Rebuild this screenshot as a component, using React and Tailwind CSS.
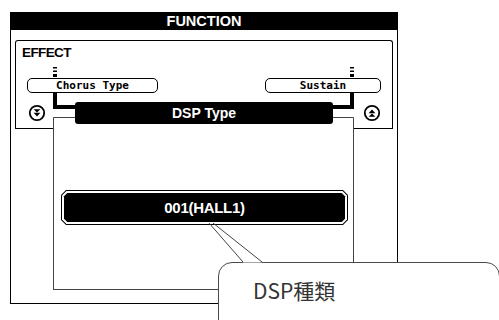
import React from "react";

// small "≡" level marker above the parameter boxes
const Marker = ({ className }) => (
  <svg width="4" height="10" viewBox="0 0 4 10" className={className}>
    <rect x="0" y="0" width="4" height="1.5" fill="#000" />
    <rect x="0" y="3.5" width="4" height="1.5" fill="#000" />
    <rect x="0" y="7" width="4" height="3" fill="#000" />
  </svg>
);

const ScrollIcon = ({ up }) => (
  <svg width="18" height="18" viewBox="0 0 18 18" className={up ? "rotate-180" : ""}>
    <circle cx="9" cy="9" r="7.2" fill="#fff" stroke="#000" strokeWidth="1.8" />
    <path d="M5.6 5.2h6.8L9 8.6z M5.6 8.8h6.8L9 12.4z" fill="#000" />
  </svg>
);

// chamfered polygon points, inset by d
const oct = (w, h, c, d) => {
  const e = c + d * 0.414;
  return [
    [e, d], [w - e, d], [w - d, e], [w - d, h - e],
    [w - e, h - d], [e, h - d], [d, h - e], [d, e],
  ].map((p) => p.join(",")).join(" ");
};

const ValueBar = ({ children }) => (
  <div className="relative w-[287px] h-[35px] flex items-center justify-center">
    <svg width="287" height="35" className="absolute inset-0">
      <polygon points={oct(287, 35, 5, 0)} fill="#000" />
      <polygon points={oct(287, 35, 5, 1)} fill="#fff" />
      <polygon points={oct(287, 35, 5, 3)} fill="#000" />
    </svg>
    <span className="relative text-white font-bold text-[15px] leading-none tracking-[-0.3px]">
      {children}
    </span>
  </div>
);

const ParamBox = ({ label, width, markerLeft }) => (
  <div className="flex flex-col">
    <Marker className={markerLeft} />
    <div
      className={`mt-[1px] h-[15px] ${width} border border-black rounded-[5px] flex items-center justify-center font-['DejaVu_Sans_Mono',monospace] font-bold text-[11px] leading-none`}
    >
      {label}
    </div>
  </div>
);

export default function App() {
  return (
    <div className="relative w-[499px] h-[320px] overflow-hidden bg-white text-black font-['Liberation_Sans',Arial,sans-serif]">
      <div className="ml-[10px] mt-[12px] w-[388px] h-[292px] border-x border-b border-black flex flex-col">
        <div className="h-[18px] bg-black text-white text-center font-bold text-[14.5px] leading-[18px]">
          FUNCTION
        </div>

        <div className="mt-[10px] mx-[4px]">
          {/* EFFECT panel head */}
          <div className="border-x border-t border-black rounded-t-[3px] flex flex-col">
            <div className="mt-[4px] ml-[6px] h-[16px] leading-[16px] font-bold text-[13.5px] tracking-[-0.6px]">
              EFFECT
            </div>
            <div className="mt-[6px] px-[11px] flex justify-between">
              <ParamBox label="Chorus Type" width="w-[131px]" markerLeft="ml-[26px]" />
              <ParamBox label="Sustain" width="w-[116px]" markerLeft="ml-[85px]" />
            </div>
            <div className="flex h-[36px]">
              <div className="w-[37px] border-b border-black pl-[12px] pt-[11px]">
                <ScrollIcon />
              </div>
              <svg width="22" height="36" viewBox="0 0 22 36" className="shrink-0">
                <rect x="0" y="0" width="4" height="16" fill="#000" />
                <rect x="0" y="12" width="22" height="4" fill="#000" />
                <path d="M22 24.5H0.5V36" fill="none" stroke="#444" strokeWidth="1" />
              </svg>
              <div className="w-[258px] pt-[9px]">
                <div className="h-[22px] bg-black rounded-[3px] flex items-center justify-center text-white font-bold text-[14px] leading-none">
                  DSP Type
                </div>
              </div>
              <svg width="21" height="36" viewBox="0 0 21 36" className="shrink-0">
                <rect x="17" y="0" width="4" height="16" fill="#000" />
                <rect x="0" y="12" width="21" height="4" fill="#000" />
                <path d="M0 24.5H20.5V36" fill="none" stroke="#444" strokeWidth="1" />
              </svg>
              <div className="w-[38px] border-b border-black pl-[9px] pt-[11px]">
                <ScrollIcon up />
              </div>
            </div>
          </div>

          {/* value area */}
          <div className="ml-[38px] w-[301px] h-[161px] border-x border-b border-[#444] pt-[61px] pl-[7px]">
            <ValueBar>001(HALL1)</ValueBar>
          </div>
        </div>
      </div>

      {/* callout */}
      <div className="absolute left-[218px] top-[262px] w-[282px] h-[80px] rounded-[14px] border border-[#4a4a4a] bg-white pl-[34px] pt-[17px]">
        <span className="text-[21px] leading-none text-[#333] font-['Noto_Sans_CJK_JP','Noto_Sans',sans-serif] font-normal">
          DSP種類
        </span>
      </div>
      <svg width="499" height="320" className="absolute inset-0 pointer-events-none">
        <polygon points="211.6,226 216.8,226 262,262.6 243,262.6" fill="#fff" />
        <line x1="209" y1="223" x2="243" y2="262" stroke="#444" strokeWidth="1" />
        <line x1="213" y1="223" x2="262" y2="262" stroke="#444" strokeWidth="1" />
      </svg>
    </div>
  );
}
